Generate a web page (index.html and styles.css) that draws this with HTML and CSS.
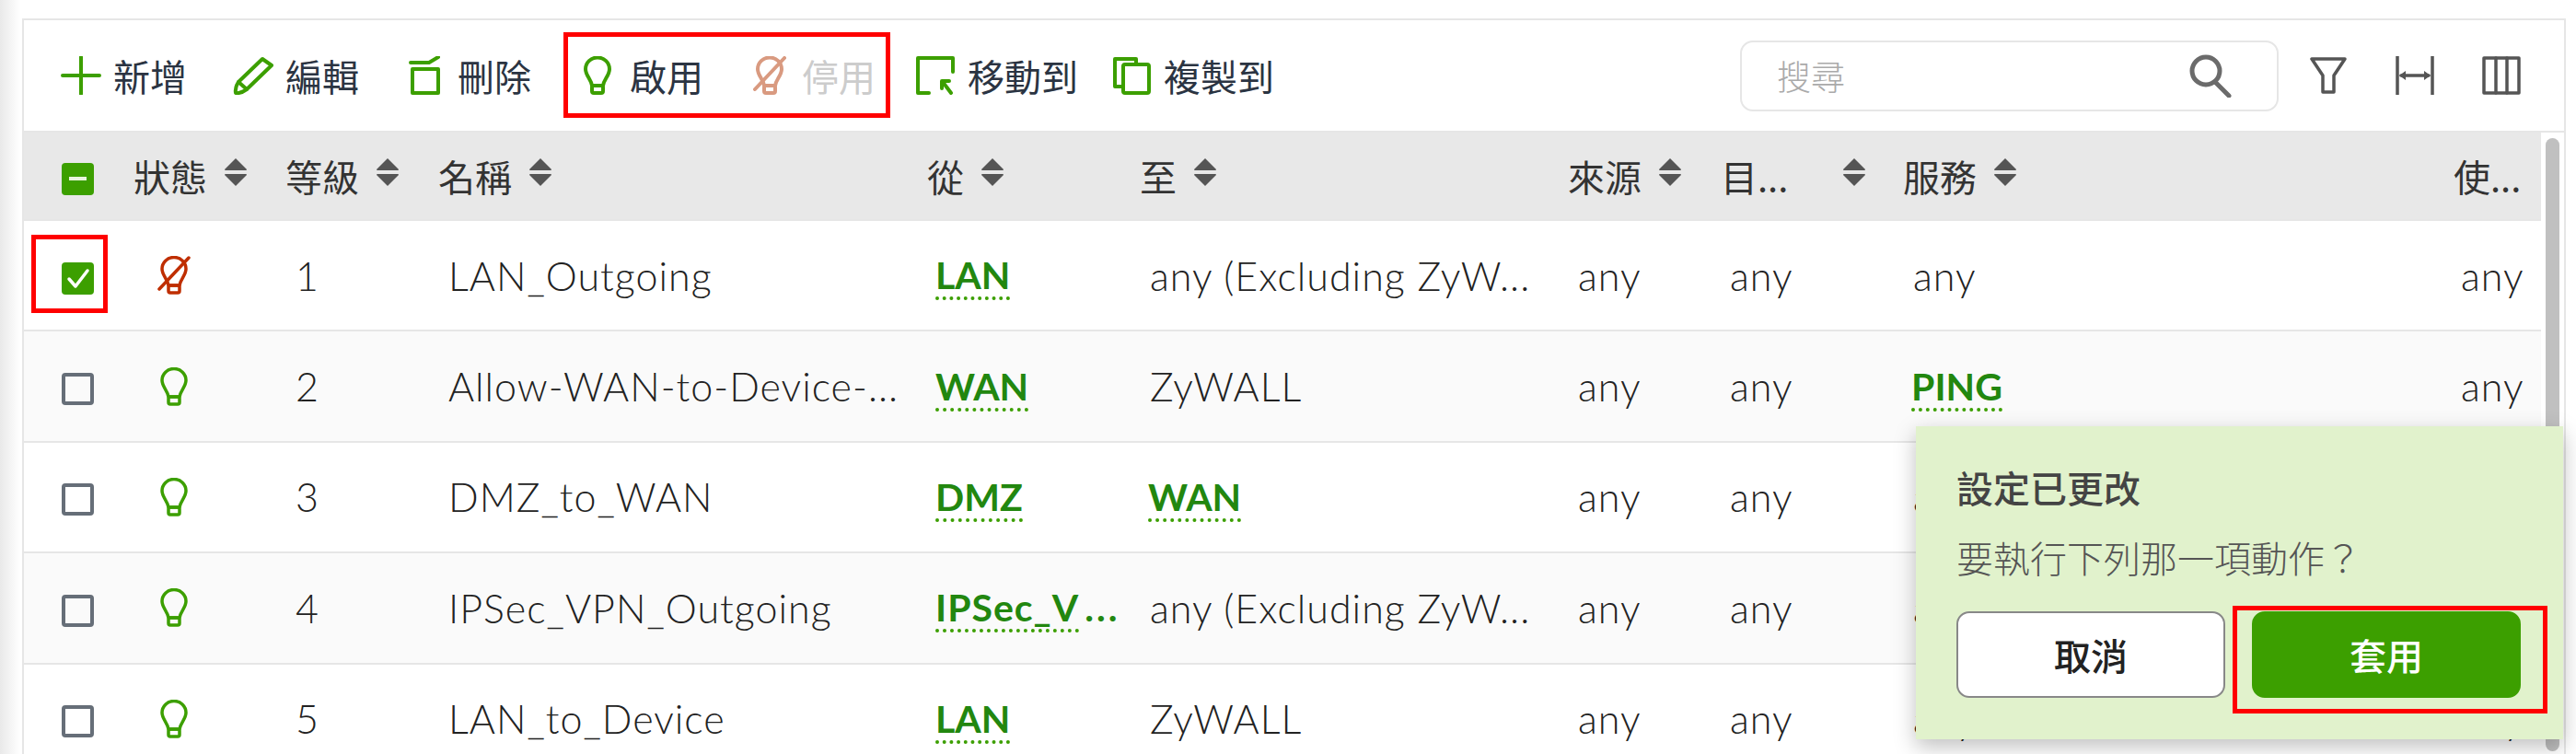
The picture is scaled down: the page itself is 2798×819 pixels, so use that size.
FILE: index.html
```html
<!DOCTYPE html>
<html lang="zh-Hant">

<head>
    <meta charset="UTF-8">
    <title>安全性原則</title>
    <link rel="stylesheet" href="styles.css">
</head>

<body>
    <svg class="sprites" width="0" height="0">
        <symbol id="i-bulb" viewBox="0 0 36 42">
            <path d="M12 32 C11 25 5 21 5 14 A13 12.5 0 0 1 31 14 C31 21 25 25 24 32 Z" />
            <rect x="12" y="32" width="12" height="8" rx="2" />
        </symbol>
        <symbol id="i-bulb-off" viewBox="0 0 36 42">
            <path d="M12 32 C11 25 5 21 5 14 A13 12.5 0 0 1 31 14 C31 21 25 25 24 32 Z" />
            <rect x="12" y="32" width="12" height="8" rx="2" />
            <path d="M2 36 L34 2" />
        </symbol>
        <symbol id="i-sort" viewBox="0 0 24 30">
            <path class="solid" d="M12 0 L24 12 Q24 13 23 13 H1 Q0 13 0 12 Z" />
            <path class="solid" d="M12 30 L24 18 Q24 17 23 17 H1 Q0 17 0 18 Z" />
        </symbol>
    </svg>

    <div class="panel">
        <div class="toolbar">
            <a class="tool">
                <svg class="tool-icon" viewBox="0 0 44 42"><path d="M22 1 V41 M2 21 H42" /></svg>
                新增
            </a>
            <a class="tool">
                <svg class="tool-icon" viewBox="0 0 44 42">
                    <path d="M32 3 L42 10 L15 36 Q8 41 3 40 Q2 34 6 28 Z" />
                    <path d="M6 28 L15 36" />
                </svg>
                編輯
            </a>
            <a class="tool">
                <svg class="tool-icon" viewBox="0 0 44 42">
                    <rect x="8" y="14" width="28" height="26" />
                    <path d="M6 7 H26 L36 1" />
                </svg>
                刪除
            </a>
            <a class="tool">
                <svg class="tool-icon"><use href="#i-bulb" /></svg>
                啟用
            </a>
            <a class="tool tool--disabled">
                <svg class="tool-icon"><use href="#i-bulb-off" /></svg>
                停用
            </a>
            <a class="tool tool--move">
                <svg class="tool-icon" viewBox="0 0 44 42">
                    <path d="M3 2 H41 V17 M3 2 V40 H15" />
                    <path d="M29 27 V35 M29 27 H37 M30 28 L39 40" />
                </svg>
                移動到
            </a>
            <a class="tool tool--copy">
                <svg class="tool-icon" viewBox="0 0 44 42">
                    <path d="M12 33 H4 V3 H27 V9" />
                    <rect x="13" y="9" width="28" height="31" rx="2" />
                </svg>
                複製到
            </a>

            <div class="search">
                <span class="search-hint">搜尋</span>
                <svg class="search-icon" viewBox="0 0 48 48">
                    <circle cx="19" cy="19" r="15" />
                    <path d="M29 31 L44 46" />
                </svg>
            </div>

            <svg class="view-icon" viewBox="0 0 42 42"><path d="M3 3 H39 L27 21 V39 H15 V21 Z" /></svg>
            <svg class="view-icon" viewBox="0 0 42 42">
                <path d="M2 0 V42 M40 0 V42 M6 21 H36" />
                <path class="solid" d="M4 21 L11 16 V26 Z M38 21 L31 16 V26 Z" />
            </svg>
            <svg class="view-icon" viewBox="0 0 42 42">
                <rect x="2" y="2" width="38" height="38" />
                <path d="M15 2 V40 M27 2 V40" />
            </svg>
        </div>

        <div class="table-wrap">
            <div class="table">
                <div class="grid-row head">
                    <div class="cell cell--check"><span class="check check--some"></span></div>
                    <div class="head-cell">狀態<svg class="sort"><use href="#i-sort" /></svg></div>
                    <div class="head-cell">等級<svg class="sort"><use href="#i-sort" /></svg></div>
                    <div class="head-cell">名稱<svg class="sort"><use href="#i-sort" /></svg></div>
                    <div class="head-cell">從<svg class="sort"><use href="#i-sort" /></svg></div>
                    <div class="head-cell">至<svg class="sort"><use href="#i-sort" /></svg></div>
                    <div class="head-cell">來源<svg class="sort"><use href="#i-sort" /></svg></div>
                    <div class="head-cell">目...<svg class="sort sort--far"><use href="#i-sort" /></svg></div>
                    <div class="head-cell">服務<svg class="sort"><use href="#i-sort" /></svg></div>
                    <div class="head-cell">使...</div>
                </div>

                <div class="grid-row">
                    <div class="cell cell--check">
                        <span class="check check--on">
                            <svg viewBox="0 0 35 35"><path d="M8 18 L15 26 L28 9" /></svg>
                        </span>
                    </div>
                    <div class="cell cell--state"><svg class="state state--off"><use href="#i-bulb-off" /></svg></div>
                    <div class="cell">1</div>
                    <div class="cell">LAN_Outgoing</div>
                    <div class="cell"><a class="link">LAN</a></div>
                    <div class="cell">any (Excluding ZyW...</div>
                    <div class="cell">any</div>
                    <div class="cell cell--tight">any</div>
                    <div class="cell">any</div>
                    <div class="cell cell--user">any</div>
                </div>

                <div class="grid-row">
                    <div class="cell cell--check"><span class="check"></span></div>
                    <div class="cell cell--state"><svg class="state"><use href="#i-bulb" /></svg></div>
                    <div class="cell">2</div>
                    <div class="cell">Allow-WAN-to-Device-...</div>
                    <div class="cell"><a class="link">WAN</a></div>
                    <div class="cell">ZyWALL</div>
                    <div class="cell">any</div>
                    <div class="cell cell--tight">any</div>
                    <div class="cell"><a class="link">PING</a></div>
                    <div class="cell cell--user">any</div>
                </div>

                <div class="grid-row">
                    <div class="cell cell--check"><span class="check"></span></div>
                    <div class="cell cell--state"><svg class="state"><use href="#i-bulb" /></svg></div>
                    <div class="cell">3</div>
                    <div class="cell">DMZ_to_WAN</div>
                    <div class="cell"><a class="link">DMZ</a></div>
                    <div class="cell"><a class="link">WAN</a></div>
                    <div class="cell">any</div>
                    <div class="cell cell--tight">any</div>
                    <div class="cell">any</div>
                    <div class="cell cell--user">any</div>
                </div>

                <div class="grid-row">
                    <div class="cell cell--check"><span class="check"></span></div>
                    <div class="cell cell--state"><svg class="state"><use href="#i-bulb" /></svg></div>
                    <div class="cell">4</div>
                    <div class="cell">IPSec_VPN_Outgoing</div>
                    <div class="cell"><a class="link link--cut">IPSec_V</a><span class="link-more">...</span></div>
                    <div class="cell">any (Excluding ZyW...</div>
                    <div class="cell">any</div>
                    <div class="cell cell--tight">any</div>
                    <div class="cell">any</div>
                    <div class="cell cell--user">any</div>
                </div>

                <div class="grid-row">
                    <div class="cell cell--check"><span class="check"></span></div>
                    <div class="cell cell--state"><svg class="state"><use href="#i-bulb" /></svg></div>
                    <div class="cell">5</div>
                    <div class="cell">LAN_to_Device</div>
                    <div class="cell"><a class="link">LAN</a></div>
                    <div class="cell">ZyWALL</div>
                    <div class="cell">any</div>
                    <div class="cell cell--tight">any</div>
                    <div class="cell">any</div>
                    <div class="cell cell--user">any</div>
                </div>
            </div>

            <div class="scrollbar"><div class="scrollbar-thumb"></div></div>
        </div>
    </div>

    <div class="popup">
        <div class="popup-title">設定已更改</div>
        <div class="popup-text">要執行下列那一項動作？</div>
        <div class="popup-actions">
            <button type="button" class="btn">取消</button>
            <button type="button" class="btn btn--primary">套用</button>
        </div>
    </div>

    <div class="mark mark--tools"></div>
    <div class="mark mark--check"></div>
    <div class="mark mark--apply"></div>
</body>

</html>
```

FILE: styles.css
```css
:root {
    --green: #3c9f00;
    --link-green: #22870f;
    --line: #e6e6e6;
    --text: #333333;
    --cjk: "Noto Sans CJK TC", sans-serif;
}

html,
body {
    height: 100%;
}

body {
    margin: 0;
    overflow: hidden;
    background: linear-gradient(90deg, #e9e9e9, #ffffff 22px);
    color: var(--text);
    font-family: "Lato", var(--cjk);
    font-size: 40px;
}

.sprites {
    position: absolute;
}

svg {
    fill: none;
    stroke: currentColor;
    stroke-width: 3.5;
    stroke-linecap: round;
    stroke-linejoin: round;
}

svg .solid,
symbol .solid {
    fill: currentColor;
    stroke: none;
}

.panel {
    width: 2763px;
    height: 830px;
    margin: 20px 0 0 24px;
    box-sizing: border-box;
    border: 2px solid var(--line);
    background: white;
}

/* toolbar */
.toolbar {
    display: flex;
    align-items: center;
    height: 122px;
    box-sizing: border-box;
    padding: 0 47px 0 40px;
    border-bottom: 2px solid var(--line);
    font-family: var(--cjk);
    color: #2b3442;
}

.tool {
    display: flex;
    align-items: center;
    gap: 13px;
    margin-right: 50px;
    white-space: nowrap;
}

.tool-icon {
    width: 44px;
    height: 42px;
    color: var(--green);
    stroke-width: 4;
}

.tool--disabled {
    margin-right: 43px;
    color: #cccccc;
}

.tool--disabled .tool-icon {
    color: #d99a80;
}

.tool--move {
    margin-right: 36px;
}

.tool--copy {
    margin-right: 0;
}

.search {
    display: flex;
    align-items: center;
    justify-content: space-between;
    width: 585px;
    height: 77px;
    margin-left: auto;
    margin-right: 33px;
    box-sizing: border-box;
    padding: 0 48px 0 38px;
    border: 2px solid var(--line);
    border-radius: 14px;
}

.search-hint {
    color: #aaaaaa;
    font-size: 37px;
    font-weight: 300;
}

.search-icon {
    width: 48px;
    height: 48px;
    color: #6b6b6b;
    stroke-width: 5;
}

.view-icon {
    width: 42px;
    height: 42px;
    margin-left: 52px;
    color: #555555;
}

.search + .view-icon {
    margin-left: 0;
}

/* table */
.table-wrap {
    display: flex;
}

.table {
    width: 2734px;
}

.grid-row {
    display: grid;
    grid-template-columns: 119px 165px 166px 531px 231px 465px 166px 198px 598px 95px;
    align-items: center;
    height: 120.4px;
    box-sizing: border-box;
    border-bottom: 2px solid var(--line);
    background: white;
}

.grid-row:nth-child(odd) {
    background: #fafafa;
}

.grid-row.head {
    height: 96px;
    background: #e8e8e8;
    font-family: var(--cjk);
}

.head-cell {
    display: flex;
    align-items: center;
    white-space: nowrap;
}

.sort {
    width: 24px;
    height: 30px;
    margin: 0 0 8px 19px;
    color: #555555;
}

.sort--far {
    margin-left: 60px;
}

.cell {
    padding-left: 11px;
    color: #222222;
    font-size: 43px;
    font-weight: 300;
    white-space: nowrap;
    letter-spacing: 1px;
}

.cell--check {
    display: flex;
    padding: 6px 0 0 41px;
}

.cell--state {
    display: flex;
    padding-left: 26px;
}

.cell--tight {
    padding-left: 10px;
}

.cell--user {
    padding-left: 8px;
}

.check {
    display: block;
    width: 35px;
    height: 35px;
    box-sizing: border-box;
    border: 4px solid #666e78;
    border-radius: 4px;
}

.check--on,
.check--some {
    position: relative;
    border: 0;
    background: var(--green);
}

.check--on svg {
    display: block;
    width: 35px;
    height: 35px;
    color: white;
}

.check--some::after {
    content: "";
    position: absolute;
    left: 8px;
    top: 15px;
    width: 19px;
    height: 4px;
    background: #e9f5de;
}

.state {
    width: 36px;
    height: 42px;
    color: var(--green);
}

.state--off {
    color: #bf2e00;
}

.link {
    display: inline-block;
    margin-left: -2px;
    padding-bottom: 1px;
    border-bottom: 4px dotted var(--green);
    color: var(--link-green);
    font-size: 41px;
    font-weight: 700;
    line-height: 44px;
    letter-spacing: 0;
}

.link--cut {
    letter-spacing: 1px;
}

.link-more {
    margin-left: 6px;
    color: var(--link-green);
    font-size: 41px;
    font-weight: 700;
    letter-spacing: 3px;
}

.scrollbar {
    width: 25px;
    padding: 6px 0 0 5px;
    box-sizing: border-box;
}

.scrollbar-thumb {
    width: 15px;
    height: 666px;
    border-radius: 8px;
    background: #c0c0c0;
}

/* popup */
.popup {
    position: absolute;
    left: 2081px;
    top: 463px;
    width: 703px;
    height: 340px;
    box-sizing: border-box;
    padding: 37px 46px 0 44px;
    background: #e1f2cc;
    box-shadow: 0 8px 22px rgba(0, 0, 0, 0.25);
    font-family: var(--cjk);
}

.popup-title {
    color: #444444;
    font-weight: 500;
    line-height: 58px;
}

.popup-text {
    margin-top: 18px;
    color: #555555;
    font-weight: 300;
    line-height: 58px;
}

.popup-actions {
    display: flex;
    gap: 29px;
    margin-top: 30px;
}

.btn {
    width: 292px;
    height: 94px;
    box-sizing: border-box;
    border: 2px solid #888888;
    border-radius: 14px;
    background: white;
    color: #222222;
    font: 500 40px var(--cjk);
}

.btn--primary {
    border-color: var(--green);
    background: var(--green);
    color: white;
}

/* red annotation frames */
.mark {
    position: absolute;
    box-sizing: border-box;
    border: 5px solid #ff0000;
}

.mark--tools {
    left: 612px;
    top: 35px;
    width: 355px;
    height: 93px;
}

.mark--check {
    left: 34px;
    top: 255px;
    width: 83px;
    height: 85px;
}

.mark--apply {
    left: 2425px;
    top: 658px;
    width: 342px;
    height: 117px;
}
```
